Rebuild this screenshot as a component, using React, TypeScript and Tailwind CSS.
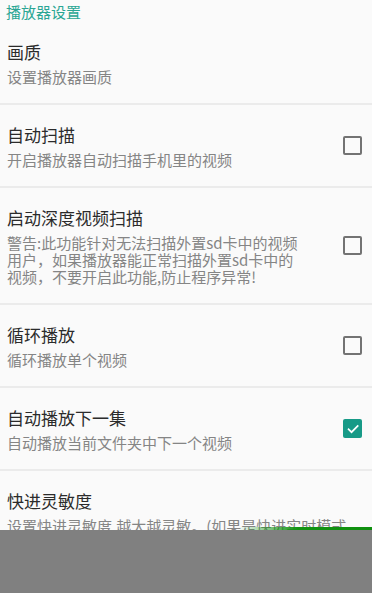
import React from "react";

const font = { fontFamily: '"Noto Sans CJK SC", "Noto Sans", sans-serif' };

function Checkbox({ checked }: { checked?: boolean }) {
  if (checked) {
    return (
      <div className="w-[19px] h-[19px] rounded-[2px] bg-[#179a87] flex items-center justify-center">
        <svg width="14" height="14" viewBox="0 0 24 24" fill="none">
          <path d="M4.5 12.5l5 5L20 7" stroke="#ffffff" strokeWidth="3" strokeLinecap="square" />
        </svg>
      </div>
    );
  }
  return <div className="w-[19px] h-[19px] rounded-[2px] border-2 border-[#737373]" />;
}

function Item({
  title,
  lines,
  checkbox,
  checked,
}: {
  title: string;
  lines: string[];
  checkbox?: boolean;
  checked?: boolean;
}) {
  return (
    <div className="flex items-center border-b-2 border-[#ebebeb] pl-[7px] pr-[10px] pt-[18px] pb-[18px]">
      <div className="flex-1 min-w-0">
        <div className="text-[17px] leading-[24px] text-[#2b2b2b]">{title}</div>
        <div className="mt-[4px] text-[15px] leading-[17px] text-[#858585]">
          {lines.map((l, i) => (
            <div key={i} className="whitespace-nowrap">
              {l}
            </div>
          ))}
        </div>
      </div>
      {checkbox && (
        <div className="ml-2 flex items-center">
          <Checkbox checked={checked} />
        </div>
      )}
    </div>
  );
}

export default function App() {
  return (
    <div className="relative w-[372px] h-[593px] overflow-hidden bg-[#fafafa]" style={font}>
      <div className="h-[22px] pl-[6px] pt-[1px] text-[15px] leading-[22px] text-[#2aa694]">播放器设置</div>
      <Item title="画质" lines={["设置播放器画质"]} />
      <Item title="自动扫描" lines={["开启播放器自动扫描手机里的视频"]} checkbox />
      <Item
        title="启动深度视频扫描"
        lines={[
          "警告:此功能针对无法扫描外置sd卡中的视频",
          "用户，如果播放器能正常扫描外置sd卡中的",
          "视频，不要开启此功能,防止程序异常!",
        ]}
        checkbox
      />
      <Item title="循环播放" lines={["循环播放单个视频"]} checkbox />
      <Item title="自动播放下一集" lines={["自动播放当前文件夹中下一个视频"]} checkbox checked />
      <Item title="快进灵敏度" lines={["设置快进灵敏度,越大越灵敏。(如果是快进实时模式"]} />

      <div className="absolute left-0 right-0 bottom-[63px] h-[3px] bg-[linear-gradient(to_right,rgba(17,146,17,0)_64%,#129412_80%,#0f8f0f_100%)]" />
      <div className="absolute left-0 right-0 bottom-0 h-[63px] bg-[#808080]" />
    </div>
  );
}
